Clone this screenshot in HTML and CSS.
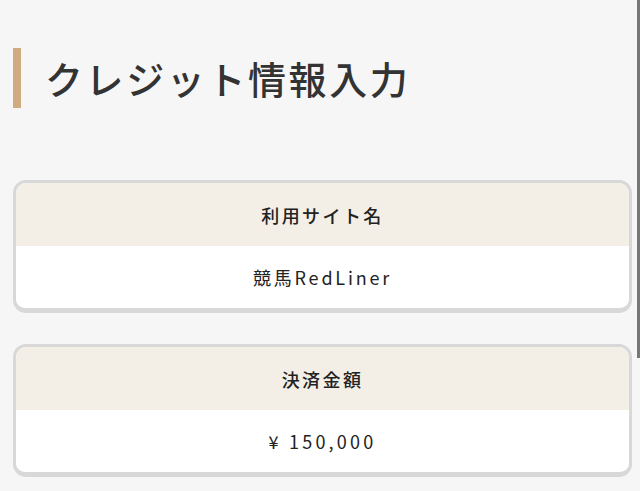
FILE: index.html
```html
<!DOCTYPE html>
<html lang="ja">
<head>
<meta charset="utf-8">
<title>クレジット情報入力</title>
<link rel="stylesheet" href="styles.css">
</head>
<body>
<main class="page">
  <h1 class="title">クレジット情報入力</h1>
  <section class="card">
    <div class="card-head">利用サイト名</div>
    <div class="card-body">競馬RedLiner</div>
  </section>
  <section class="card">
    <div class="card-head">決済金額</div>
    <div class="card-body card-amount">¥ 150,000</div>
  </section>
</main>
<div class="scroll-thumb"></div>
</body>
</html>
```
FILE: styles.css
```css
html, body {
  margin: 0;
  padding: 0;
  background: #f6f6f6;
  height: 100%;
  overflow: hidden;
}
body {
  font-family: "Noto Sans CJK JP", "Noto Sans", sans-serif;
  color: #222;
}
.page {
  padding: 48px 8px 0 13px;
  display: flex;
  flex-direction: column;
}
.title {
  margin: 0 0 72px 0;
  height: 60px;
  display: flex;
  align-items: center;
  border-left: 8px solid #cfab82;
  padding-left: 24px;
  font-size: 38px;
  font-weight: 500;
  letter-spacing: 2.6px;
  color: #333;
  line-height: 1;
}
.card {
  border: 3px solid #d8d8d8;
  border-bottom-width: 5px;
  border-radius: 13px;
  overflow: hidden;
  margin-bottom: 31px;
  background: #fff;
}
.card-head {
  background: #f3efe7;
  height: 63px;
  display: flex;
  align-items: center;
  justify-content: center;
  font-size: 18px;
  font-weight: 500;
  letter-spacing: 2.4px;
  color: #222;
}
.card-body {
  height: 62px;
  display: flex;
  align-items: center;
  justify-content: center;
  font-size: 18px;
  letter-spacing: 2.8px;
  color: #222;
}
.card-amount {
  letter-spacing: 3.2px;
}
.scroll-thumb {
  position: fixed;
  top: 0;
  right: 0;
  width: 3px;
  height: 358px;
  background: #777;
}
```
